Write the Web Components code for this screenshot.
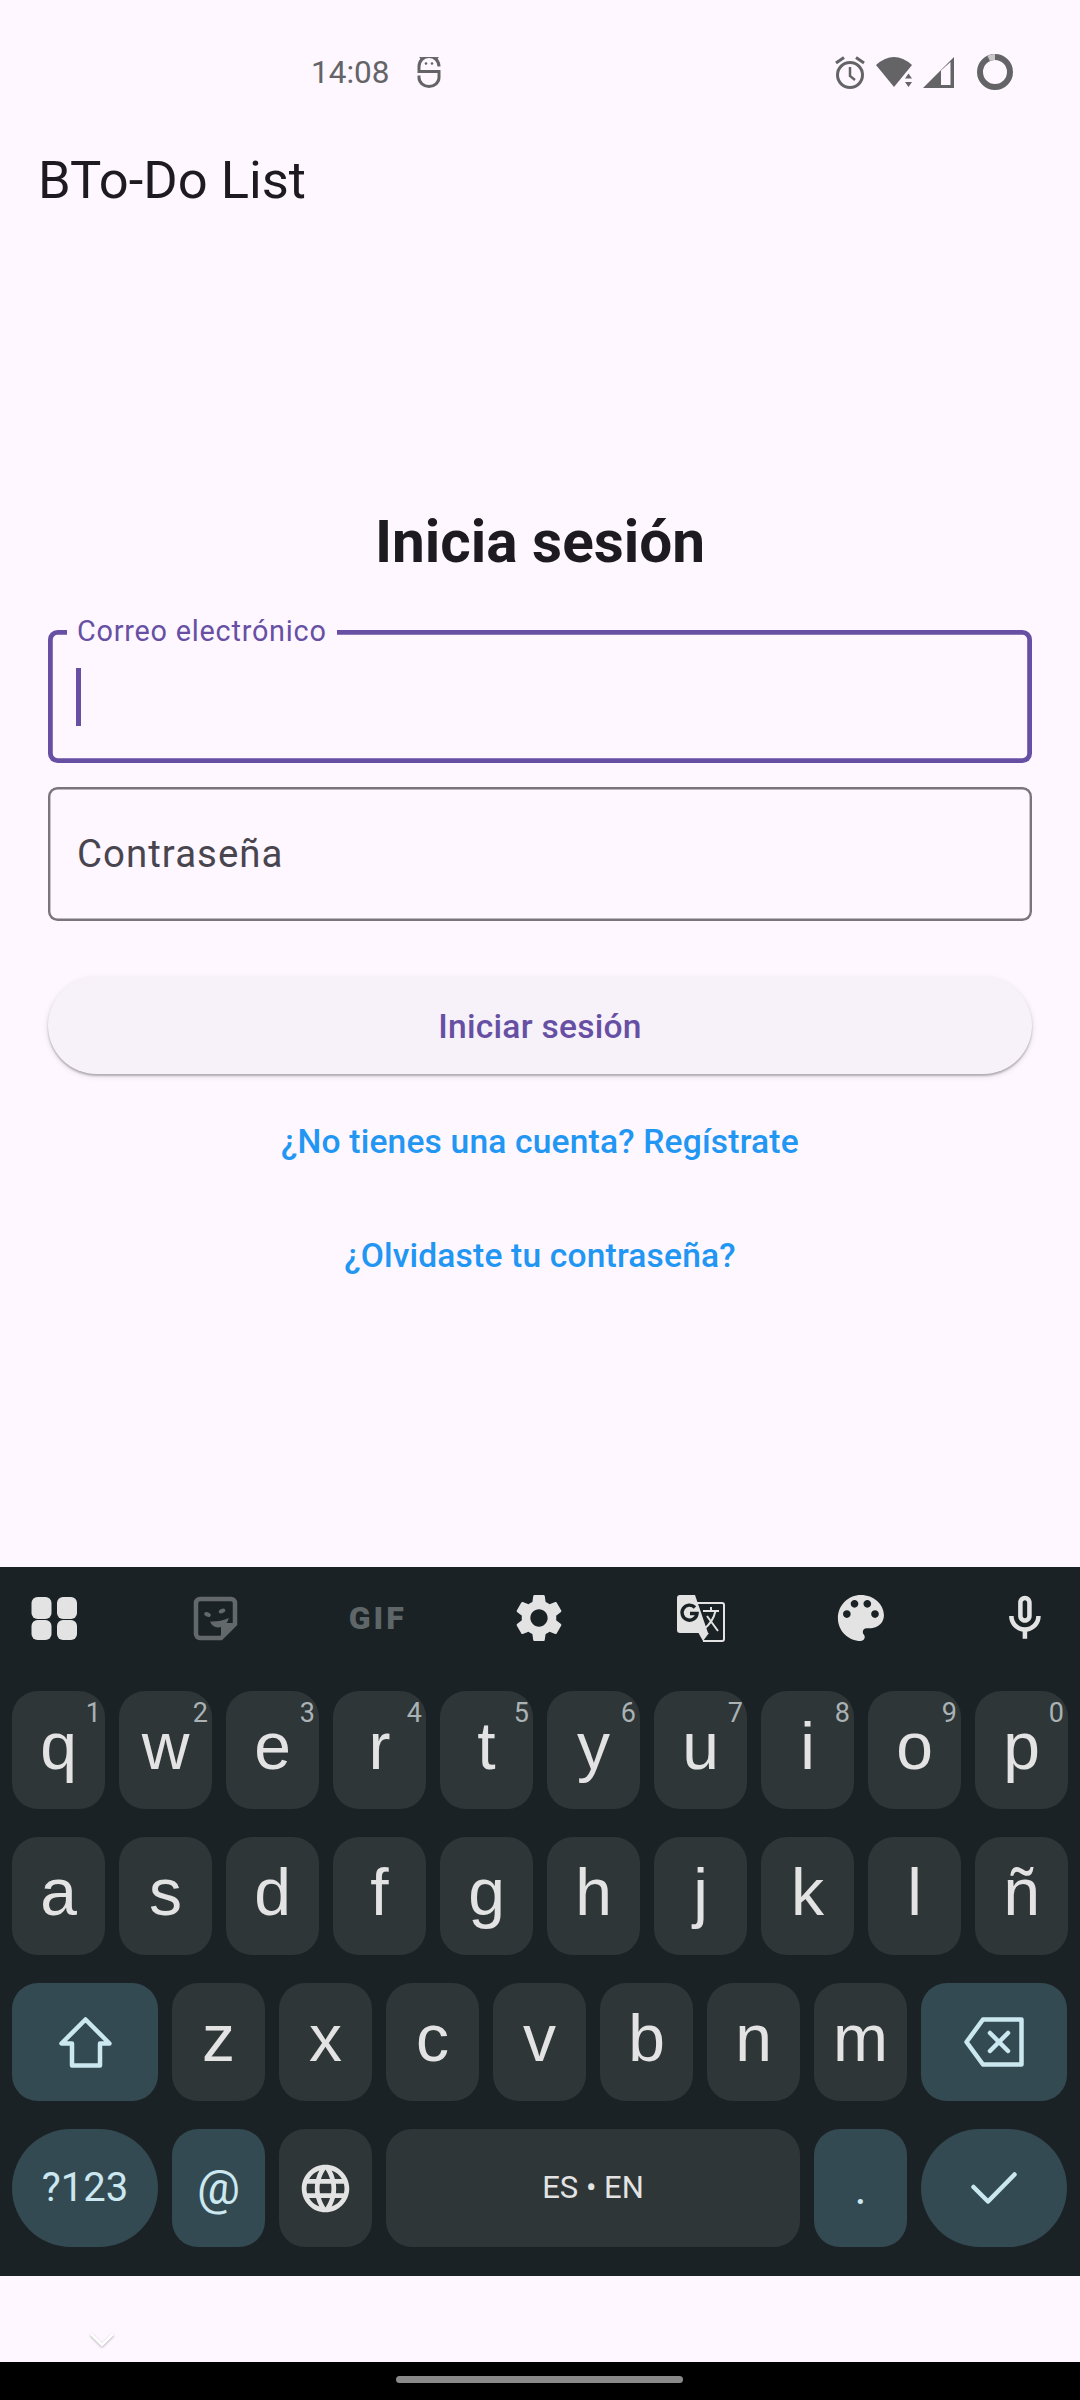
<!DOCTYPE html>
<html lang="es">
<head>
<meta charset="utf-8">
<title>BTo-Do List</title>
<style>
    html, body { margin: 0; padding: 0; }
    body { width: 1080px; height: 2400px; overflow: hidden; background: #fef7ff; font-family: Roboto, sans-serif; }
</style>
</head>
<body>
<login-app>
    <status-bar slot="top"></status-bar>
    <app-bar slot="top">BTo-Do List</app-bar>
    <login-form slot="top">
        <text-field focused>Correo electrónico</text-field>
        <text-field>Contraseña</text-field>
    </login-form>
    <soft-keyboard slot="bottom">
        <kb-row>
            <kb-key hint="1">q</kb-key><kb-key hint="2">w</kb-key><kb-key hint="3">e</kb-key><kb-key hint="4">r</kb-key><kb-key hint="5">t</kb-key>
            <kb-key hint="6">y</kb-key><kb-key hint="7">u</kb-key><kb-key hint="8">i</kb-key><kb-key hint="9">o</kb-key><kb-key hint="0">p</kb-key>
        </kb-row>
        <kb-row>
            <kb-key>a</kb-key><kb-key>s</kb-key><kb-key>d</kb-key><kb-key>f</kb-key><kb-key>g</kb-key>
            <kb-key>h</kb-key><kb-key>j</kb-key><kb-key>k</kb-key><kb-key>l</kb-key><kb-key>ñ</kb-key>
        </kb-row>
        <kb-row>
            <kb-key kind="func" size="wide">
                <svg width="53" height="51" viewBox="0 0 53 51" fill="none" stroke="#cbe8f0" stroke-width="4.5" stroke-linejoin="round"><path d="M26.5 2.5 2.5 26.5H13V48.5H41V26.5H50.5Z"/></svg>
            </kb-key>
            <kb-key>z</kb-key><kb-key>x</kb-key><kb-key>c</kb-key><kb-key>v</kb-key><kb-key>b</kb-key><kb-key>n</kb-key><kb-key>m</kb-key>
            <kb-key kind="func" size="wide">
                <svg width="60" height="50" viewBox="0 0 60 50" fill="none" stroke="#cbe8f0" stroke-width="4.5" stroke-linejoin="round" stroke-linecap="round"><path d="M19 2.5H57.5V47.5H19L2.5 25Z"/><path d="M26 16 44 34M44 16 26 34"/></svg>
            </kb-key>
        </kb-row>
        <kb-row>
            <kb-key kind="func" size="wide" pill text="40">?123</kb-key>
            <kb-key kind="func" text="48">@</kb-key>
            <kb-key>
                <svg width="57" height="57" viewBox="0 0 24 24" fill="#e3e3e3"><path d="M11.99 2C6.47 2 2 6.48 2 12s4.47 10 9.99 10C17.52 22 22 17.52 22 12S17.52 2 11.99 2zm6.93 6h-2.95c-.32-1.25-.78-2.45-1.38-3.56 1.84.63 3.37 1.91 4.33 3.56zM12 4.04c.83 1.2 1.48 2.53 1.91 3.96h-3.82c.43-1.43 1.08-2.76 1.91-3.96zM4.26 14C4.1 13.36 4 12.69 4 12s.1-1.36.26-2h3.38c-.08.66-.14 1.32-.14 2s.06 1.34.14 2H4.26zm.82 2h2.95c.32 1.25.78 2.45 1.38 3.56-1.84-.63-3.37-1.9-4.33-3.56zm2.95-8H5.08c.96-1.66 2.49-2.93 4.33-3.56C8.81 5.55 8.35 6.75 8.03 8zM12 19.96c-.83-1.2-1.48-2.53-1.91-3.96h3.82c-.43 1.43-1.08 2.76-1.91 3.96zM14.34 14H9.66c-.09-.66-.16-1.32-.16-2s.07-1.35.16-2h4.68c.09.65.16 1.32.16 2s-.07 1.34-.16 2zm.25 5.56c.6-1.11 1.06-2.31 1.38-3.56h2.95c-.96 1.65-2.49 2.93-4.33 3.56zM16.36 14c.08-.66.14-1.32.14-2s-.06-1.34-.14-2h3.38c.16.64.26 1.31.26 2s-.1 1.36-.26 2h-3.38z"/></svg>
            </kb-key>
            <kb-key size="space" text="31">ES • EN</kb-key>
            <kb-key kind="func" text="46">.</kb-key>
            <kb-key kind="func" size="wide" pill>
                <svg width="46" height="32" viewBox="0 0 46 32" fill="none" stroke="#cbe8f0" stroke-width="4.5" stroke-linejoin="round" stroke-linecap="round"><path d="M2.5 15 17 29.5 43.5 2.5"/></svg>
            </kb-key>
        </kb-row>
    </soft-keyboard>
    <gesture-area slot="bottom"></gesture-area>
    <nav-bar slot="bottom"></nav-bar>
</login-app>

<script>
class LoginApp extends HTMLElement {
    constructor() {
        super();
        this.attachShadow({ mode: 'open' });
        this.shadowRoot.innerHTML = `
            <style>
                :host { display: flex; flex-direction: column; justify-content: space-between; height: 2400px; background: #fef7ff; }
                .top, .bottom { display: block; }
            </style>
            <div class="top"><slot name="top"></slot></div>
            <div class="bottom"><slot name="bottom"></slot></div>
        `;
    }
}

class StatusBar extends HTMLElement {
    constructor() {
        super();
        this.attachShadow({ mode: 'open' });
        this.shadowRoot.innerHTML = `
            <style>
                :host { display: flex; align-items: center; height: 144px; padding: 0 67px 0 311px; color: #646466; font-size: 31.5px; }
                .time { width: 77px; margin-right: 28px; white-space: nowrap; }
                .right { display: flex; align-items: center; margin-left: auto; }
                svg { display: block; }
            </style>
            <span class="time">14:08</span>
            <svg width="26" height="32" viewBox="10 57 26 32" style="margin-top:2px" fill="none" stroke="#646466" stroke-width="3">
                <g transform="translate(0 47.5)">
                    <path d="M33 19A10 10 0 0 0 13 19V24H33V30A10 9 0 0 1 13 30V28"/>
                    <path d="M14 9 16 12M32 9 30 12" stroke-width="2"/>
                    <circle cx="20" cy="16" r="1.3" fill="#646466" stroke="none"/>
                    <circle cx="26" cy="16" r="1.3" fill="#646466" stroke="none"/>
                </g>
            </svg>
            <div class="right">
                <svg width="32" height="33" viewBox="0 0 32 33" fill="none" stroke="#646466" stroke-width="3">
                    <circle cx="16" cy="19" r="12.5"/>
                    <path d="M16 11V20L21 24" stroke-width="2.5"/>
                    <path d="M2 7 10 1.5M30 7 22 1.5" stroke-width="3"/>
                </svg>
                <svg width="36" height="30" viewBox="0 0 36 30" fill="#646466" style="margin-left:10px">
                    <path d="M0 8Q18-8 36 8L18 30Z"/>
                    <path d="M29 21.5 32.5 16.5 36 21.5ZM29 25 36 25 32.5 30Z"/>
                </svg>
                <svg width="31" height="31" viewBox="0 0 31 31" style="margin-left:11px">
                    <path d="M0 31 31 0V31Z" fill="#646466"/>
                    <path d="M18 28V13.5L27.5 5V28Z" fill="#fef7ff"/>
                </svg>
                <svg width="36" height="36" viewBox="0 0 36 36" fill="none" stroke-width="6" style="margin-left:23px">
                    <circle cx="18" cy="18" r="15" stroke="#646466"/>
                    <path d="M11.66 4.4A15 15 0 0 1 18 3" stroke="#c9c7c9"/>
                </svg>
            </div>
        `;
    }
}

class AppBar extends HTMLElement {
    constructor() {
        super();
        this.attachShadow({ mode: 'open' });
        this.shadowRoot.innerHTML = `
            <style>
                :host { display: flex; align-items: center; height: 72px; padding-left: 38px; font-size: 52.5px; color: #1d1b20; }
            </style>
            <slot></slot>
        `;
    }
}

class TextField extends HTMLElement {
    constructor() {
        super();
        this.attachShadow({ mode: 'open' });
        this.shadowRoot.innerHTML = `
            <style>
                :host { display: flex; align-items: center; position: relative; box-sizing: border-box; height: 134px; padding-left: 29px; border-radius: 9.6px; box-shadow: inset 0 0 0 2.4px #79747e; color: #49454f; font-size: 38.4px; letter-spacing: 1.05px; line-height: 44px; }
                :host([focused]) { height: 133px; box-shadow: inset 0 0 0 4.8px #6750a4; }
                .caret { display: none; width: 5px; height: 58px; background: #6750a4; margin-left: -1px; }
                :host([focused]) .caret { display: block; }
                :host([focused]) .label { position: absolute; left: 19px; top: 1px; transform: translateY(-50%); padding: 0 10px; background: #fef7ff; color: #6750a4; font-size: 28.8px; letter-spacing: .78px; line-height: 32px; }
            </style>
            <span class="caret"></span>
            <span class="label"><slot></slot></span>
        `;
    }
}

class LoginForm extends HTMLElement {
    constructor() {
        super();
        this.attachShadow({ mode: 'open' });
        this.shadowRoot.innerHTML = `
            <style>
                :host { display: flex; flex-direction: column; padding: 292px 48px 0; }
                h1 { margin: 0 0 54px; font-size: 58.5px; line-height: 68px; font-weight: 700; text-align: center; color: #1d1b20; }
                .fields { display: flex; flex-direction: column; gap: 24px; }
                button { display: block; width: 100%; height: 97px; margin-top: 56px; padding: 2px 0 0; border: 0; border-radius: 49px; background: #f7f2fa; color: #6750a4; font: 500 33.6px Roboto, sans-serif; letter-spacing: .24px; box-shadow: 0 2px 2px rgba(0,0,0,.24), 0 2px 6px rgba(0,0,0,.12); }
                .link { display: block; text-align: center; color: #2196f3; font-size: 33.6px; font-weight: 500; line-height: 40px; letter-spacing: .17px; text-decoration: none; }
                .signup { margin-top: 47px; padding-top: 1px; }
                .forgot { margin-top: 73px; padding-top: 1px; }
            </style>
            <h1>Inicia sesión</h1>
            <div class="fields"><slot></slot></div>
            <button>Iniciar sesión</button>
            <a class="link signup">¿No tienes una cuenta? Regístrate</a>
            <a class="link forgot">¿Olvidaste tu contraseña?</a>
        `;
    }
}

class SoftKeyboard extends HTMLElement {
    constructor() {
        super();
        this.attachShadow({ mode: 'open' });
        this.shadowRoot.innerHTML = `
            <style>
                :host { display: block; height: 709px; box-sizing: border-box; background: #1b2225; padding-bottom: 29px; }
                .toolbar { display: flex; justify-content: space-between; align-items: center; box-sizing: border-box; height: 124px; padding: 0 31px 22px 30px; }
                .toolbar > * { width: 48px; height: 48px; display: flex; align-items: center; justify-content: center; flex: none; overflow: visible; }
                .gif { color: #5f6668; font-size: 32px; font-weight: 900; letter-spacing: 3px; white-space: nowrap; }
                .rows { display: flex; flex-direction: column; gap: 28px; padding: 0 12px; }
            </style>
            <div class="toolbar">
                <svg viewBox="0 0 48 48" fill="#e3e3e3">
                    <rect x="1.5" y="3" width="20" height="22" rx="6"/><rect x="27" y="3" width="20" height="22" rx="6"/>
                    <rect x="1.5" y="26" width="20" height="20" rx="6"/><rect x="27" y="26" width="20" height="20" rx="6"/>
                </svg>
                <svg viewBox="0 0 48 48" fill="#63696b">
                    <path d="M8 5H39A4 4 0 0 1 43 9V30L29 44H8A4 4 0 0 1 4 40V9A4 4 0 0 1 8 5Z" fill="none" stroke="#63696b" stroke-width="4.5"/>
                    <path d="M43 29H33A4 4 0 0 0 29 33V44Z"/>
                    <ellipse cx="15.5" cy="20.5" rx="3.4" ry="2.2" transform="rotate(20 15.5 20.5)"/>
                    <ellipse cx="30" cy="17" rx="3.4" ry="2.2" transform="rotate(-20 30 17)"/>
                    <path d="M18 27.5Q28 28 37 24Q34 33.5 26 33.5Q20 33 18 27.5Z"/>
                </svg>
                <span class="gif">GIF</span>
                <svg viewBox="0 0 24 24" fill="#e3e3e3"><path d="M19.14 12.94c.04-.3.06-.61.06-.94 0-.32-.02-.64-.07-.94l2.03-1.58c.18-.14.23-.41.12-.61l-1.92-3.32c-.12-.22-.37-.29-.59-.22l-2.39.96c-.5-.38-1.03-.7-1.62-.94l-.36-2.54c-.04-.24-.24-.41-.48-.41h-3.84c-.24 0-.43.17-.47.41l-.36 2.54c-.59.24-1.13.57-1.62.94l-2.39-.96c-.22-.08-.47 0-.59.22L2.74 8.87c-.12.21-.08.47.12.61l2.03 1.58c-.05.3-.09.63-.09.94s.02.64.07.94l-2.03 1.58c-.18.14-.23.41-.12.61l1.92 3.32c.12.22.37.29.59.22l2.39-.96c.5.38 1.03.7 1.62.94l.36 2.54c.05.24.24.41.48.41h3.84c.24 0 .44-.17.47-.41l.36-2.54c.59-.24 1.13-.56 1.62-.94l2.39.96c.22.08.47 0 .59-.22l1.92-3.32c.12-.22.07-.47-.12-.61l-2.01-1.58zM12 15.6c-1.98 0-3.6-1.62-3.6-3.6s1.62-3.6 3.6-3.6 3.6 1.62 3.6 3.6-1.62 3.6-3.6 3.6z" transform="translate(-2.4 -2.4) scale(1.2)"/></svg>
                <svg viewBox="0 0 48 48" fill="#e3e3e3">
                    <path d="M3 1H18L31 39H3A3 3 0 0 1 0 36V4A3 3 0 0 1 3 1Z"/>
                    <path d="M21.5 39H32L26 47Z"/>
                    <path d="M20 9H45A2 2 0 0 1 47 11V45A2 2 0 0 1 45 47H26" fill="none" stroke="#e3e3e3" stroke-width="2"/>
                    <path d="M18 13.5A7.5 7.5 0 1 0 20 19.5H13" fill="none" stroke="#1b2225" stroke-width="3.4"/>
                    <path d="M26 17H42M34 13V17M38.5 17Q36 28 27 35M30 22 41 37" fill="none" stroke="#e3e3e3" stroke-width="2"/>
                </svg>
                <svg viewBox="0 0 24 24" fill="#e3e3e3"><path d="M12 3c-4.97 0-9 4.03-9 9s4.03 9 9 9c.83 0 1.5-.67 1.5-1.5 0-.39-.15-.74-.39-1.01-.23-.26-.38-.61-.38-.99 0-.83.67-1.5 1.5-1.5H16c2.76 0 5-2.24 5-5 0-4.42-4.03-8-9-8zm-5.5 9c-.83 0-1.5-.67-1.5-1.5S5.67 9 6.5 9 8 9.67 8 10.5 7.33 12 6.5 12zm3-4C8.67 8 8 7.33 8 6.5S8.67 5 9.5 5s1.5.67 1.5 1.5S10.33 8 9.5 8zm5 0c-.83 0-1.5-.67-1.5-1.5S13.67 5 14.5 5s1.5.67 1.5 1.5S15.33 8 14.5 8zm3 4c-.83 0-1.5-.67-1.5-1.5S16.67 9 17.5 9s1.5.67 1.5 1.5-.67 1.5-1.5 1.5z" transform="translate(-4.4 -3.4) scale(1.28)"/></svg>
                <svg viewBox="0 0 24 24" fill="#e3e3e3"><path d="M12 14c1.66 0 3-1.34 3-3V5c0-1.66-1.34-3-3-3S9 3.34 9 5v6c0 1.66 1.34 3 3 3zm-1-9c0-.55.45-1 1-1s1 .45 1 1v6c0 .55-.45 1-1 1s-1-.45-1-1V5zm6 6c0 2.76-2.24 5-5 5s-5-2.24-5-5H5c0 3.53 2.61 6.43 6 6.92V21h2v-3.08c3.39-.49 6-3.39 6-6.92h-2z" transform="translate(-1.6 -1.4) scale(1.13)"/></svg>
            </div>
            <div class="rows"><slot></slot></div>
        `;
    }
}

class KbRow extends HTMLElement {
    constructor() {
        super();
        this.attachShadow({ mode: 'open' });
        this.shadowRoot.innerHTML = `
            <style>
                :host { display: flex; gap: 14px; height: 118px; }
            </style>
            <slot></slot>
        `;
    }
}

class KbKey extends HTMLElement {
    constructor() {
        super();
        this.attachShadow({ mode: 'open' });
        const hint = this.getAttribute('hint');
        const text = this.getAttribute('text');
        const plainLetter = !text && !this.querySelector('svg');
        this.shadowRoot.innerHTML = `
            <style>
                :host { display: flex; align-items: center; justify-content: center; position: relative; flex: 0 0 93px; box-sizing: border-box; height: 118px; border-radius: 26px; background: #2f3638; color: #e3e3e3; font-family: "Liberation Sans", sans-serif; font-size: 66px; line-height: 118px; }
                :host([text]) { font-family: Roboto, sans-serif; }
                :host([kind="func"]) { background: #344a52; color: #cbe8f0; }
                :host([size="wide"]) { flex-basis: 146px; }
                :host([size="space"]) { flex-basis: 414px; }
                :host([pill]) { border-radius: 59px; }
                .label { display: flex; align-items: center; justify-content: center; padding-bottom: ${plainLetter ? 8 : 0}px; ${text ? `font-size: ${text}px;` : ''} }
                ::slotted(svg) { display: block; }
                .hint { position: absolute; top: 0; right: 4px; font-family: Roboto, sans-serif; font-size: 27px; line-height: 44px; color: #a9b2b4; }
            </style>
            <span class="label"><slot></slot></span>
            ${hint ? `<span class="hint">${hint}</span>` : ''}
        `;
    }
}

class GestureArea extends HTMLElement {
    constructor() {
        super();
        this.attachShadow({ mode: 'open' });
        this.shadowRoot.innerHTML = `
            <style>
                :host { display: block; box-sizing: border-box; height: 86px; padding: 57px 0 0 90px; }
                svg { display: block; filter: drop-shadow(0 1px 1px rgba(0,0,0,.3)); }
            </style>
            <svg width="24" height="14" viewBox="0 0 24 14" fill="none" stroke="#fff" stroke-width="2.5"><path d="M1 1 12 12 23 1"/></svg>
        `;
    }
}

class NavBar extends HTMLElement {
    constructor() {
        super();
        this.attachShadow({ mode: 'open' });
        this.shadowRoot.innerHTML = `
            <style>
                :host { display: flex; justify-content: center; box-sizing: border-box; height: 38px; padding-top: 14px; background: #000; }
                .pill { width: 287px; height: 7px; margin-left: -1px; border-radius: 4px; background: #8a8a8a; }
            </style>
            <div class="pill"></div>
        `;
    }
}

customElements.define('login-app', LoginApp);
customElements.define('status-bar', StatusBar);
customElements.define('app-bar', AppBar);
customElements.define('text-field', TextField);
customElements.define('login-form', LoginForm);
customElements.define('soft-keyboard', SoftKeyboard);
customElements.define('kb-row', KbRow);
customElements.define('kb-key', KbKey);
customElements.define('gesture-area', GestureArea);
customElements.define('nav-bar', NavBar);
</script>
</body>
</html>
